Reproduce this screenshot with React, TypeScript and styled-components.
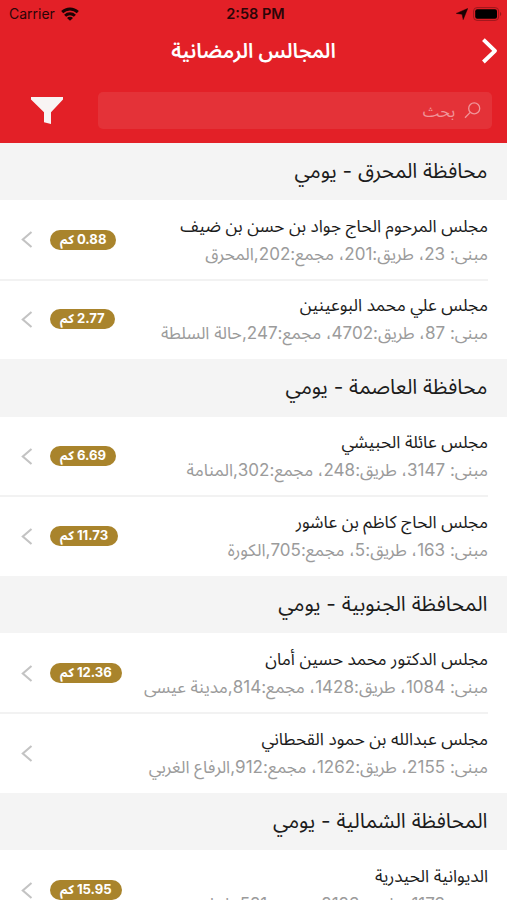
import React from "react";
import styled, { createGlobalStyle } from "styled-components";

const Global = createGlobalStyle`
  body { margin: 0; background: #fff; overflow: hidden; }
  * { box-sizing: border-box; }
`;

const Screen = styled.div`
  width: 507px;
  height: 900px;
  overflow: hidden;
  background: #fff;
  direction: rtl;
  font-family: Inter, "Noto Sans Arabic", "DejaVu Sans", sans-serif;
  color: #1c1c1c;
`;

const Header = styled.header`
  height: 142.6px;
  background: #e32027;
  display: flex;
  flex-direction: column;
`;

const StatusBar = styled.div`
  direction: ltr;
  height: 27px;
  display: grid;
  grid-template-columns: 1fr auto 1fr;
  align-items: center;
  padding: 0 5px 0 9px;
  color: #2b0507;
  font-size: 14px;
`;

const Carrier = styled.div`
  display: flex;
  align-items: center;
  gap: 6px;
`;

const Clock = styled.div`
  font-weight: 600;
  font-size: 14.5px;
`;

const Indicators = styled.div`
  display: flex;
  align-items: center;
  justify-content: flex-end;
  gap: 5px;
`;

const TitleBar = styled.div`
  height: 48px;
  display: grid;
  grid-template-columns: 40px 1fr 40px;
  align-items: center;
  padding: 0 9px;
`;

const Title = styled.h1`
  margin: 0;
  text-align: center;
  color: #fff;
  font-size: 20.5px;
  font-weight: 600;
  line-height: 30px;
  white-space: nowrap;
`;

const SearchRow = styled.div`
  display: flex;
  align-items: center;
  padding: 17px 15px 0 31px;
  justify-content: space-between;
`;

const SearchField = styled.div`
  width: 394px;
  height: 37px;
  border-radius: 5px;
  background: #e43238;
  display: flex;
  align-items: center;
  padding: 0 11px;
  gap: 9px;
  color: #f0959a;
  font-size: 16.2px;
`;

const SearchHint = styled.span`
  padding-top: 2px;
`;

const SectionTitle = styled.h2`
  margin: 0;
  height: 57.2px;
  padding: 0 19.5px;
  background: #f4f4f4;
  font-size: 20.8px;
  font-weight: 400;
  line-height: 56px;
  white-space: nowrap;
`;

const Row = styled.div`
  height: 79.8px;
  display: flex;
  align-items: center;
  justify-content: space-between;
  padding: 0 19px 0 21px;
`;

const Divider = styled.div`
  height: 2px;
  margin: -1px 19px -1px 0;
  background: #f2f2f2;
`;

const RowText = styled.div`
  display: flex;
  flex-direction: column;
  white-space: nowrap;
`;

const Name = styled.div`
  font-size: 17.15px;
  font-weight: 450;
  line-height: 27px;
  padding-bottom: 1px;
`;

const Address = styled.div`
  font-size: 17.05px;
  line-height: 28px;
  color: #9b9b9b;
`;

const Trailing = styled.div`
  display: flex;
  align-items: center;
  gap: 17px;
`;

const Badge = styled.span`
  height: 20px;
  padding: 0 10px;
  border-radius: 10px;
  background: #a9842c;
  color: #fff;
  font-size: 12.5px;
  font-weight: 700;
  line-height: 19px;
  white-space: nowrap;
`;

const Distance = styled.span`
  font-size: 13.1px;
`;

type Place = { name: string; address: string; distance?: string };

const sections: { title: string; places: Place[] }[] = [
  {
    title: "محافظة المحرق - يومي",
    places: [
      { name: "مجلس المرحوم الحاج جواد بن حسن بن ضيف", address: "مبنى: 23، طريق:201، مجمع:202,المحرق", distance: "0.88" },
      { name: "مجلس علي محمد البوعينين", address: "مبنى: 87، طريق:4702، مجمع:247,حالة السلطة", distance: "2.77" },
    ],
  },
  {
    title: "محافظة العاصمة - يومي",
    places: [
      { name: "مجلس عائلة الحبيشي", address: "مبنى: 3147، طريق:248، مجمع:302,المنامة", distance: "6.69" },
      { name: "مجلس الحاج كاظم بن عاشور", address: "مبنى: 163، طريق:5، مجمع:705,الكورة", distance: "11.73" },
    ],
  },
  {
    title: "المحافظة الجنوبية - يومي",
    places: [
      { name: "مجلس الدكتور محمد حسين أمان", address: "مبنى: 1084، طريق:1428، مجمع:814,مدينة عيسى", distance: "12.36" },
      { name: "مجلس عبدالله بن حمود القحطاني", address: "مبنى: 2155، طريق:1262، مجمع:912,الرفاع الغربي" },
    ],
  },
  {
    title: "المحافظة الشمالية - يومي",
    places: [{ name: "الديوانية الحيدرية", address: "مبنى: 1173، طريق:2123، مجمع:521,باربار", distance: "15.95" }],
  },
];

const WifiIcon = () => (
  <svg width="18" height="14" viewBox="0 0 18 14" fill="none" stroke="#1c0304" strokeWidth="2.9">
    <path d="M1.2 5.1a11.2 11.2 0 0 1 15.6 0" />
    <path d="M4.1 8.8a7 7 0 0 1 9.8 0" />
    <path d="M9 13.8 6 10.9a4.2 4.2 0 0 1 6 0z" fill="#1c0304" stroke="none" />
  </svg>
);

const LocationIcon = () => (
  <svg width="12" height="12" viewBox="0 0 12 12">
    <path d="M11.7.5 7.2 11.6 6.1 6.2.3 5.4z" fill="#1a0304" stroke="#1a0304" strokeWidth=".5" strokeLinejoin="round" />
  </svg>
);

const BatteryIcon = () => (
  <svg width="29" height="14" viewBox="0 0 29 14">
    <rect x=".6" y=".6" width="25" height="12.8" rx="3.4" fill="none" stroke="#9c171c" />
    <rect x="2.2" y="2.2" width="21.8" height="9.6" rx="2" fill="#000" />
    <path d="M27 5v4a2.2 2.2 0 0 0 0-4" fill="#9c171c" />
  </svg>
);

const BackIcon = () => (
  <svg width="17" height="28" viewBox="0 0 17 28" fill="none" stroke="#fff" strokeWidth="3.9" strokeLinejoin="round">
    <path d="M2.4 2.6 14 13.8 2.4 25" />
  </svg>
);

const FilterIcon = () => (
  <svg width="32" height="28" viewBox="0 0 32 28" fill="#f8f4f4">
    <path d="M0 0h32v2.5L20 15.2V27l-7-1.8v-10L0 2.5z" />
  </svg>
);

const SearchIcon = () => (
  <svg width="17" height="17" viewBox="0 0 17 17" fill="none" stroke="#f0959a" strokeWidth="1.3">
    <circle cx="10.2" cy="6.4" r="5.5" />
    <path d="M6.2 10.4 1 15.8" />
  </svg>
);

const ChevronIcon = () => (
  <svg width="12" height="17" viewBox="0 0 12 17" fill="none" stroke="#c3c3c3" strokeWidth="2.1">
    <path d="M10.5 1 1.8 8.5l8.7 7.5" />
  </svg>
);

export default function App() {
  return (
    <Screen>
      <Global />
      <Header>
        <StatusBar>
          <Carrier>Carrier<WifiIcon /></Carrier>
          <Clock>2:58 PM</Clock>
          <Indicators><LocationIcon /><BatteryIcon /></Indicators>
        </StatusBar>
        <TitleBar>
          <BackIcon />
          <Title>المجالس الرمضانية</Title>
        </TitleBar>
        <SearchRow>
          <SearchField><SearchIcon /><SearchHint>بحث</SearchHint></SearchField>
          <FilterIcon />
        </SearchRow>
      </Header>
      {sections.map((section) => (
        <section key={section.title}>
          <SectionTitle>{section.title}</SectionTitle>
          {section.places.map((place, i) => (
            <React.Fragment key={place.name}>
              {i > 0 && <Divider />}
              <Row>
                <RowText>
                  <Name>{place.name}</Name>
                  <Address>{place.address}</Address>
                </RowText>
                <Trailing>
                  {place.distance && <Badge><Distance>{place.distance}</Distance> كم</Badge>}
                  <ChevronIcon />
                </Trailing>
              </Row>
            </React.Fragment>
          ))}
        </section>
      ))}
    </Screen>
  );
}
